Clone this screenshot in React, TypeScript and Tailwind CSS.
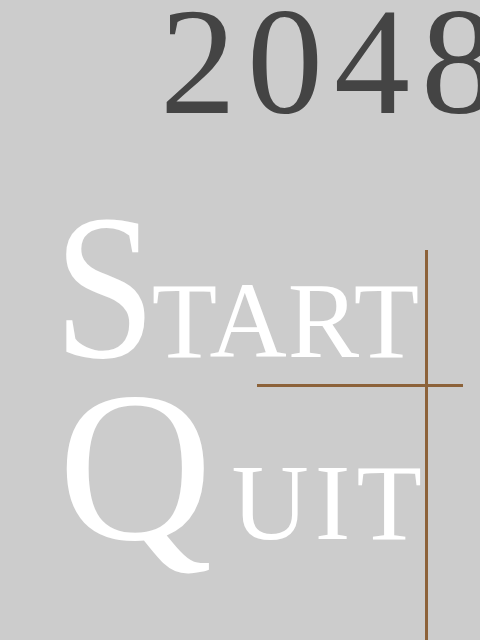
import React from "react";

const serif = { fontFamily: '"Liberation Serif", "Times New Roman", serif' };

export default function App() {
  return (
    <div className="relative w-[480px] h-[640px] bg-[#cccccc] overflow-hidden" style={serif}>
      {/* title */}
      <div className="-mt-[14px] pl-[160px] text-[152px] leading-[152px] tracking-[11px] text-[#444444] whitespace-nowrap">
        2048
      </div>

      {/* menu */}
      <div className="mt-[59px] flex flex-col text-white text-[208px] leading-[180px] whitespace-nowrap">
        <div className="pl-[54px]">
          <span className="inline-block origin-left scale-x-[0.88] -mr-[18px]">S</span>
          <span className="leading-none text-[107px] tracking-[1px]">TART</span>
        </div>
        <div className="pl-[58px]">
          <span className="text-[214px] mr-[19px]">Q</span>
          <span className="leading-none text-[107px] tracking-[6px]">UIT</span>
        </div>
      </div>

      {/* decorative cross lines */}
      <div className="absolute left-[425px] top-[250px] w-[3px] h-[390px] bg-[#8c6239]" />
      <div className="absolute left-[257px] top-[384px] w-[206px] h-[3px] bg-[#8c6239]" />
    </div>
  );
}
